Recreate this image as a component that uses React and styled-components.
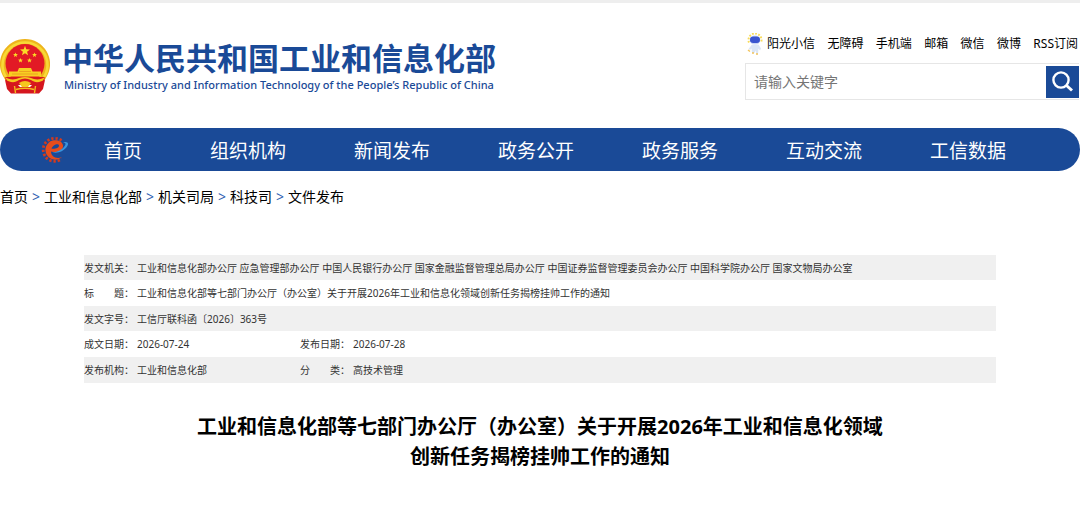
import React from 'react';
import styled, { createGlobalStyle } from 'styled-components';

const blue = '#1a4a97';

const GlobalStyle = createGlobalStyle`
  * { box-sizing: border-box; }
  body {
    margin: 0;
    background: #fff;
    color: #000;
    font-family: "Noto Sans", "Noto Sans CJK SC", sans-serif;
  }
`;

const Page = styled.div`
  border-top: 3px solid #eeeeee;
`;

const Header = styled.header`
  display: flex;
  justify-content: space-between;
  padding: 29px 1px 28px 0;
`;

const Brand = styled.a`
  display: flex;
  align-items: flex-start;
  gap: 12px;
  padding-top: 7px;
  color: ${blue};
  text-decoration: none;
`;

const EmblemSvg = styled.svg`
  display: block;
  width: 50px;
  height: 55px;
`;

const BrandText = styled.span`
  display: flex;
  flex-direction: column;
  white-space: nowrap;
`;

const BrandName = styled.span`
  font-size: 31px;
  line-height: 38px;
  font-weight: 700;
`;

const BrandSub = styled.span`
  padding-left: 2px;
  font-family: "Noto Sans", sans-serif;
  font-size: 11px;
  line-height: 16px;
  font-weight: 500;
`;

const Tools = styled.div`
  display: flex;
  flex-direction: column;
  gap: 8px;
  width: 334px;
`;

const QuickLinks = styled.nav`
  display: flex;
  align-items: center;
  justify-content: space-between;
  height: 23px;
  padding: 0 1px 0 2px;
`;

const QuickLink = styled.a`
  display: flex;
  align-items: center;
  gap: 4px;
  color: #000;
  font-size: 12px;
  line-height: 20px;
  white-space: nowrap;
  text-decoration: none;
`;

const Search = styled.form`
  display: flex;
  align-items: center;
  height: 37px;
  border: 1px solid #e6e6e6;
  border-right: 0;
`;

const SearchInput = styled.input`
  flex: 1;
  min-width: 0;
  padding: 0 8px;
  border: 0;
  outline: 0;
  background: none;
  font-family: inherit;
  font-size: 14px;
  &::placeholder { color: #757575; opacity: 1; }
`;

const SearchButton = styled.button`
  display: flex;
  align-items: center;
  justify-content: center;
  width: 33px;
  height: 32px;
  padding: 0;
  border: 0;
  background: ${blue};
`;

const MainNav = styled.nav`
  display: flex;
  align-items: center;
  padding: 7px 0 6px 41px;
  border-radius: 22px;
  background: ${blue};
`;

const NavList = styled.div`
  display: flex;
  gap: 68px;
  padding: 2px 0 0 35px;
`;

const NavLink = styled.a`
  color: #fff;
  font-size: 19px;
  line-height: 28px;
  white-space: nowrap;
  text-decoration: none;
`;

const Breadcrumb = styled.nav`
  display: flex;
  align-items: center;
  gap: 4px;
  padding: 16px 0;
  font-size: 14px;
  line-height: 20px;
  white-space: nowrap;
`;

const Crumb = styled.a`
  color: #000;
  text-decoration: none;
`;

const Separator = styled.span`
  color: #2d62b0;
`;

const Article = styled.main`
  padding: 32px 84px 0;
`;

const Meta = styled.table`
  width: 100%;
  border-collapse: collapse;
  table-layout: fixed;
  color: #333;
  font-size: 10px;
  line-height: 20px;
`;

const LabelCol = styled.col`
  width: 52px;
`;

const ValueCol = styled.col`
  width: ${(p) => p.$width || 'auto'};
`;

const MetaRow = styled.tr`
  height: 26px;
  &:nth-child(odd) {
    background: #f0f0f0;
  }
  &:nth-child(-2n + 3) {
    height: 25px;
  }
`;

const MetaLabel = styled.th`
  padding: 0;
  font-weight: 400;
  text-align: left;
  white-space: nowrap;
`;

const MetaValue = styled.td`
  padding: 0 0 0 1px;
  white-space: nowrap;
`;

const Title = styled.h1`
  margin: 29px 0 0;
  font-size: 20px;
  line-height: 30px;
  font-weight: 700;
  text-align: center;
`;

const star = (cx, cy, r) =>
  Array.from({ length: 10 }, (_, i) => {
    const a = (Math.PI / 5) * i - Math.PI / 2;
    const d = i % 2 ? r * 0.42 : r;
    return `${(cx + d * Math.cos(a)).toFixed(2)},${(cy + d * Math.sin(a)).toFixed(2)}`;
  }).join(' ');

const Emblem = () => (
  <EmblemSvg viewBox="0 0 50 55" aria-hidden="true">
    <path d="M25 0A25 25 0 0 0 3 37l4 7h36l4-7A25 25 0 0 0 25 0z" fill="#eeb41c" />
    <path d="M6 38A22.500 22.500 0 1 1 44 38" fill="none" stroke="#f8d936" strokeWidth="2.600" />
    <circle cx="25" cy="24.500" r="19.500" fill="#e21a25" />
    <polygon points={star(25, 12, 5.2)} fill="#fbdc26" />
    <polygon points={star(15.5, 16, 2.6)} fill="#fbdc26" />
    <polygon points={star(34.5, 16, 2.6)} fill="#fbdc26" />
    <polygon points={star(20.5, 21.5, 2.6)} fill="#fbdc26" />
    <polygon points={star(29.5, 21.5, 2.6)} fill="#fbdc26" />
    <path d="M19 29h12l1.500 3.500H41v5H9v-5h8.500z" fill="#f8cf22" />
    <path d="M19 32.500h12M12 35h26" stroke="#e8901c" strokeWidth=".700" />
    <path d="M5 38h40l-2 8H7z" fill="#d8181f" />
    <path d="M5 38c4 3 10 3 14 1q6-2 12 0c4 2 10 2 14-1l-3 5c-4 1-8 0-11-2q-6-3-12 0c-3 2-7 3-11 2z" fill="#f6c71e" />
    <path d="M5 41l12 4 3 3h10l3-3 12-4-2 9-4 4.500H11L7 50z" fill="#d5161e" />
    <path d="M19 44q6-4 12 0l-3 4h-6z" fill="#f6c71e" />
    <path d="M14.500 47l1 7M35.500 47l-1 7M16 50.500q9-2.500 18 0" stroke="#f3bd1c" strokeWidth="1.400" fill="none" />
  </EmblemSvg>
);

const Mascot = () => (
  <svg width="16" height="22" viewBox="0 0 16 22" aria-hidden="true">
    <path d="M2 9.500A6.500 6.500 0 1 1 14 9.500" fill="none" stroke="#f8dc5c" strokeWidth="2" strokeDasharray="1.800 1.400" />
    <ellipse cx="8" cy="7" rx="5.200" ry="4.600" fill="#c9d6f5" />
    <rect x="3" y="3.500" width="10" height="6.500" rx="3.200" fill="#3a55cf" />
    <path d="M5 11.500h6.500l2.500 4-1 2-1.500-2-.500 5.500H9.500L8.500 17.500 7.500 20H5l-.500-4.500L3 17l-1.500-1z" fill="#dbe6f6" />
    <path d="M1 17l2 1.500M5 20h2M9 21h2" stroke="#f2c45c" strokeWidth="1.500" />
  </svg>
);

const GearLogo = () => (
  <svg width="28" height="28" viewBox="0 0 28 28" fill="none" aria-hidden="true">
    <path d="M20.500 4.500A11.500 11.500 0 1 0 20.500 23" stroke="#d33a1d" strokeWidth="2.800" strokeDasharray="2.300 1.900" />
    <path d="M11.500 4.500a9.800 9.800 0 1 0 9.500 16.500c-5 2.500-11 0-11-5.500l1 .300c6 1.200 11.500-2 11-6.300C21.500 5 16 3.500 11.500 4.500zm-1 8C11.500 9 17.500 6.500 18 9.500c.200 2-4 3.800-7.500 3z" fill="#e74c1b" />
    <path d="M11.500 16.500C19 18 25.500 13 27 8.500 27.500 6 24.500 5.500 22 6.500c2.500-.200 3.200 1.200 2 3-2.500 4-7 6.500-12.500 7z" fill="#3a94dc" />
  </svg>
);

const SearchIcon = () => (
  <svg width="22" height="22" viewBox="0 0 22 22" fill="none" stroke="#fff" aria-hidden="true">
    <circle cx="9" cy="9" r="7.600" strokeWidth="2.400" />
    <path d="M14.500 14.500l5.500 5" strokeWidth="3" />
  </svg>
);

const quickLinks = ['无障碍', '手机端', '邮箱', '微信', '微博', 'RSS订阅'];
const navItems = ['首页', '组织机构', '新闻发布', '政务公开', '政务服务', '互动交流', '工信数据'];
const crumbs = ['首页', '工业和信息化部', '机关司局', '科技司', '文件发布'];
const meta = [
  [['发文机关：', '工业和信息化部办公厅 应急管理部办公厅 中国人民银行办公厅 国家金融监督管理总局办公厅 中国证券监督管理委员会办公厅 中国科学院办公厅 国家文物局办公室']],
  [['标　　题：', '工业和信息化部等七部门办公厅（办公室）关于开展2026年工业和信息化领域创新任务揭榜挂帅工作的通知']],
  [['发文字号：', '工信厅联科函〔2026〕363号']],
  [['成文日期：', '2026-07-24'], ['发布日期：', '2026-07-28']],
  [['发布机构：', '工业和信息化部'], ['分　　类：', '高技术管理']],
];

export default function App() {
  return (
    <Page lang="zh-CN">
      <GlobalStyle />
      <Header>
        <Brand href="#">
          <Emblem />
          <BrandText>
            <BrandName>中华人民共和国工业和信息化部</BrandName>
            <BrandSub lang="en">Ministry of Industry and Information Technology of the People’s Republic of China</BrandSub>
          </BrandText>
        </Brand>
        <Tools>
          <QuickLinks aria-label="快捷入口">
            <QuickLink href="#"><Mascot />阳光小信</QuickLink>
            {quickLinks.map((t) => <QuickLink key={t} href="#">{t}</QuickLink>)}
          </QuickLinks>
          <Search role="search" onSubmit={(e) => e.preventDefault()}>
            <SearchInput type="text" placeholder="请输入关键字" aria-label="请输入关键字" />
            <SearchButton type="submit" aria-label="搜索"><SearchIcon /></SearchButton>
          </Search>
        </Tools>
      </Header>
      <MainNav aria-label="主导航">
        <GearLogo />
        <NavList>
          {navItems.map((t) => <NavLink key={t} href="#">{t}</NavLink>)}
        </NavList>
      </MainNav>
      <Breadcrumb aria-label="当前位置">
        {crumbs.map((t, i) => (
          <React.Fragment key={t}>
            {i > 0 && <Separator>&gt;</Separator>}
            <Crumb href="#">{t}</Crumb>
          </React.Fragment>
        ))}
      </Breadcrumb>
      <Article>
        <Meta>
          <colgroup>
            <LabelCol />
            <ValueCol $width="164px" />
            <LabelCol />
            <ValueCol />
          </colgroup>
          <tbody>
            {meta.map((row) => (
              <MetaRow key={row[0][0]}>
                {row.map(([label, value]) => (
                  <React.Fragment key={label}>
                    <MetaLabel scope="row">{label}</MetaLabel>
                    <MetaValue colSpan={row.length === 1 ? 3 : 1}>{value}</MetaValue>
                  </React.Fragment>
                ))}
              </MetaRow>
            ))}
          </tbody>
        </Meta>
        <Title>
          工业和信息化部等七部门办公厅（办公室）关于开展2026年工业和信息化领域
          <br />
          创新任务揭榜挂帅工作的通知
        </Title>
      </Article>
    </Page>
  );
}
